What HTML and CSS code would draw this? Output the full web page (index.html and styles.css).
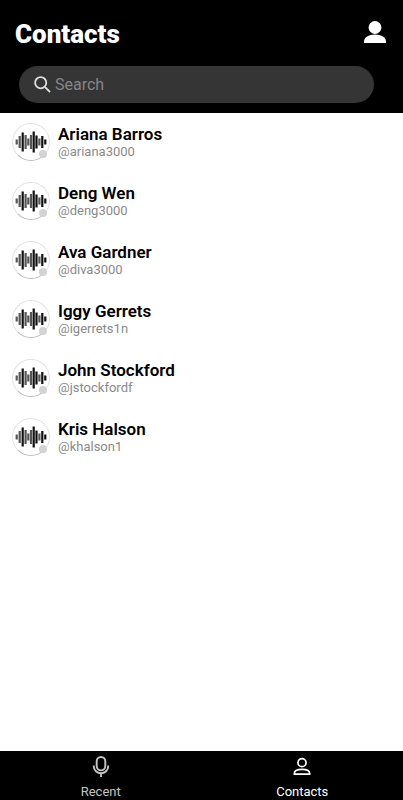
FILE: index.html
```html
<!DOCTYPE html>
<html lang="en">
<head>
    <meta charset="UTF-8">
    <meta name="viewport" content="width=device-width, initial-scale=1.0">
    <title>Contacts</title>
    <link rel="stylesheet" href="styles.css">
</head>
<body>
    <!-- Shared avatar picture -->
    <svg class="sprite" aria-hidden="true">
        <symbol id="wave" viewBox="0 0 36 36">
            <g fill="none" stroke-width="2.200">
                <path stroke="#555" d="M3.700 15.500v5M6.700 12v12"/>
                <path stroke="#111" d="M9.700 8.500v19M20.700 7.500v21M23.500 11.500v13M29.300 12v12M32.300 15.500v5"/>
                <path stroke="#555" d="M12.600 11v14M15.300 14.500v7M18 11v14M26.400 14.500v7"/>
            </g>
        </symbol>
    </svg>

    <header class="header">
        <div class="title-bar">
            <h1>Contacts</h1>
            <button class="profile-button" aria-label="Profile">
                <svg width="22" height="22" viewBox="0 0 22 22" fill="#fff">
                    <circle cx="11" cy="6.500" r="6.400"/>
                    <path d="M0 22v-1.500c0-4 4.500-7 11-7s11 3 11 7v1.500z"/>
                </svg>
            </button>
        </div>
        <div class="search-box">
            <svg width="17" height="17" viewBox="0 0 17 17" fill="none" stroke="#ddd" stroke-width="1.800">
                <circle cx="6.700" cy="6.700" r="5.600"/>
                <path d="M10.800 10.800L16 16"/>
            </svg>
            <input type="text" id="search" placeholder="Search" aria-label="Search">
        </div>
    </header>

    <main>
        <ul class="contact-list">
            <li class="contact">
                <div class="avatar"><svg><use href="#wave"/></svg><span class="status"></span></div>
                <div class="contact-info">
                    <h2>Ariana Barros</h2>
                    <p>@ariana3000</p>
                </div>
            </li>
            <li class="contact">
                <div class="avatar"><svg><use href="#wave"/></svg><span class="status"></span></div>
                <div class="contact-info">
                    <h2>Deng Wen</h2>
                    <p>@deng3000</p>
                </div>
            </li>
            <li class="contact">
                <div class="avatar"><svg><use href="#wave"/></svg><span class="status"></span></div>
                <div class="contact-info">
                    <h2>Ava Gardner</h2>
                    <p>@diva3000</p>
                </div>
            </li>
            <li class="contact">
                <div class="avatar"><svg><use href="#wave"/></svg><span class="status"></span></div>
                <div class="contact-info">
                    <h2>Iggy Gerrets</h2>
                    <p>@igerrets1n</p>
                </div>
            </li>
            <li class="contact">
                <div class="avatar"><svg><use href="#wave"/></svg><span class="status"></span></div>
                <div class="contact-info">
                    <h2>John Stockford</h2>
                    <p>@jstockfordf</p>
                </div>
            </li>
            <li class="contact">
                <div class="avatar"><svg><use href="#wave"/></svg><span class="status"></span></div>
                <div class="contact-info">
                    <h2>Kris Halson</h2>
                    <p>@khalson1</p>
                </div>
            </li>
        </ul>
    </main>

    <nav class="tab-bar">
        <a href="#recent" class="tab">
            <svg width="24" height="24" viewBox="0 0 24 24" fill="none" stroke="currentColor" stroke-width="2">
                <rect x="7.500" y="2" width="9" height="14" rx="4.500"/>
                <path d="M4.500 11v1a7.500 7 0 0 0 15 0V11M12 19v4"/>
            </svg>
            <span>Recent</span>
        </a>
        <a href="#contacts" class="tab active">
            <svg width="24" height="24" viewBox="0 0 24 24" fill="none" stroke="currentColor" stroke-width="1.800">
                <circle cx="12" cy="8" r="4.200"/>
                <path d="M4 20v-.8c0-3 3.500-4.200 8-4.200s8 1.200 8 4.200v.8z"/>
            </svg>
            <span>Contacts</span>
        </a>
    </nav>
</body>
</html>
```
FILE: styles.css
```css
* {
    box-sizing: border-box;
}

body {
    margin: 0;
    min-height: 100vh;
    display: flex;
    flex-direction: column;
    font-family: Roboto, sans-serif;
    background-color: #fff;
    color: #000;
}

h1, h2, p, ul {
    margin: 0;
    padding: 0;
}

.sprite {
    display: none;
}

.header {
    background-color: #000;
    padding: 16px 16px 10px 15px;
}

.title-bar {
    display: flex;
    align-items: center;
    justify-content: space-between;
    height: 36px;
    margin-bottom: 14px;
}

h1 {
    font-size: 26px;
    line-height: 36px;
    font-weight: 900;
    color: #fff;
}

.profile-button {
    display: flex;
    padding: 0 1px 4px;
    border: none;
    background: none;
    cursor: pointer;
}

.search-box {
    display: flex;
    align-items: center;
    gap: 4px;
    height: 37px;
    margin: 0 13px 0 4px;
    padding: 0 15px;
    border-radius: 19px;
    background-color: #353535;
}

.search-box input {
    flex: 1;
    min-width: 0;
    padding: 0;
    border: none;
    outline: none;
    background: none;
    font-family: inherit;
    font-size: 16px;
    line-height: 20px;
    color: #fff;
}

.search-box input::placeholder {
    color: #858585;
}

main {
    flex: 1;
}

.contact-list {
    list-style: none;
}

.contact {
    display: flex;
    align-items: flex-start;
    gap: 8px;
    height: 59px;
    padding: 10px 12px 0;
}

.contact-info {
    padding-top: 2px;
}

.avatar {
    position: relative;
    width: 38px;
    height: 38px;
    border: 1px solid #e2e2e2;
    border-bottom-color: #bbb;
    border-radius: 50%;
}

.avatar svg {
    display: block;
    width: 100%;
    height: 100%;
}

.status {
    position: absolute;
    right: 2px;
    bottom: 2px;
    width: 8px;
    height: 8px;
    border-radius: 50%;
    background-color: #d3d3d3;
}

.contact h2 {
    font-size: 17px;
    line-height: 19px;
    font-weight: 600;
}

.contact p {
    font-size: 13px;
    line-height: 16px;
    color: #8a8a8a;
}

.tab-bar {
    display: flex;
    height: 49px;
    background-color: #000;
}

.tab {
    flex: 1;
    display: flex;
    flex-direction: column;
    align-items: center;
    gap: 6px;
    padding-top: 4px;
    font-size: 13px;
    line-height: 16px;
    color: #c4c4c4;
    text-decoration: none;
}

.tab.active {
    color: #fff;
}
```
